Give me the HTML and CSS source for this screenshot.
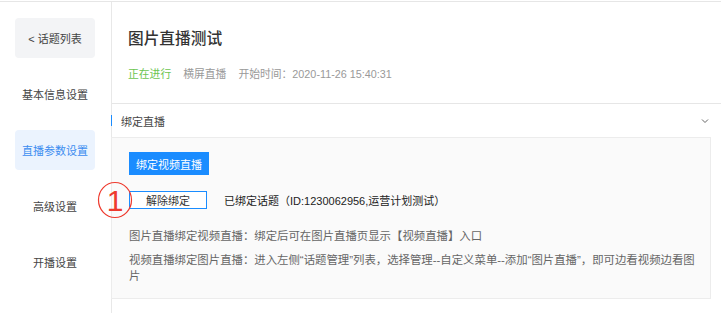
FILE: index.html
```html
<!DOCTYPE html>
<html lang="zh">
<head>
<meta charset="utf-8">
<link rel="stylesheet" href="styles.css">
</head>
<body>
<div class="page">
  <aside class="sidebar">
    <div class="nav-item nav-back">&lt; 话题列表</div>
    <div class="nav-item">基本信息设置</div>
    <div class="nav-item nav-active">直播参数设置</div>
    <div class="nav-item">高级设置</div>
    <div class="nav-item">开播设置</div>
  </aside>
  <main class="main">
    <header class="head">
      <h1 class="title">图片直播测试</h1>
      <div class="status">
        <span class="st-green">正在进行</span>
        <span class="st-gray">横屏直播</span>
        <span class="st-gray">开始时间：2020-11-26 15:40:31</span>
      </div>
    </header>
    <div class="section-head">
      <span class="marker"></span>
      <span class="section-title">绑定直播</span>
      <svg class="chev" width="8" height="6" viewBox="0 0 8 6"><path d="M1 1.5 L4 4.5 L7 1.5" fill="none" stroke="#666" stroke-width="1"/></svg>
    </div>
    <div class="panel">
      <button class="btn-primary">绑定视频直播</button>
      <div class="bind-row">
        <span class="anno"><svg width="36" height="38" viewBox="0 0 36 38"><ellipse cx="18" cy="19" rx="16.5" ry="17.5" fill="none" stroke="#ee3a2e" stroke-width="1.2"/><text x="18" y="30" text-anchor="middle" font-family="Liberation Sans, sans-serif" font-size="30" fill="#ee3a2e">1</text></svg></span>
        <button class="btn-outline">解除绑定</button>
        <span class="bound">已绑定话题（ID:1230062956,运营计划测试）</span>
      </div>
      <p class="desc">图片直播绑定视频直播：绑定后可在图片直播页显示【视频直播】入口</p>
      <p class="desc">视频直播绑定图片直播：进入左侧“话题管理”列表，选择管理--自定义菜单--添加“图片直播”，即可边看视频边看图片</p>
    </div>
  </main>
</div>
</body>
</html>
```
FILE: styles.css
```css
* { box-sizing: border-box; }
html, body { margin: 0; padding: 0; background: #fff; }
body {
  font-family: "Liberation Sans", "Noto Sans CJK SC", sans-serif;
  color: #333;
}
.page {
  display: flex;
  margin-top: 1px;
  border-top: 1px solid #e6e6e6;
  height: 312px;
}
.sidebar {
  width: 112px;
  flex: none;
  border-right: 1px solid #e8e8e8;
  padding: 16px 16px 0 15px;
  display: flex;
  flex-direction: column;
  gap: 16px;
}
.nav-item {
  height: 40px;
  border-radius: 4px;
  display: flex;
  align-items: center;
  justify-content: center;
  font-size: 11px;
  color: #444;
}
.nav-back { background: #f3f4f6; color: #444; }
.nav-active { background: #ebf3fe; color: #3b8cf0; }
.main { flex: 1; display: flex; flex-direction: column; min-width: 0; }
.head {
  height: 102px;
  border-bottom: 1px solid #e6e6e6;
  padding: 26px 16px 0 16px;
}
.title {
  margin: 0;
  font-size: 15.7px;
  line-height: 22px;
  font-weight: 500;
  color: #333;
}
.status {
  margin-top: 16px;
  display: flex;
  gap: 12px;
  font-size: 10.8px;
  line-height: 16px;
}
.st-green { color: #6cc550; }
.st-gray { color: #999; }
.section-head {
  height: 33px;
  display: flex;
  align-items: center;
  margin-left: -1px;
  padding-right: 12px;
}
.marker {
  width: 1px;
  height: 11px;
  background: #1a8cff;
  flex: none;
}
.section-title {
  margin-left: 9px;
  font-size: 11px;
  color: #444;
  flex: 1;
}
.chev { flex: none; }
.panel {
  margin: 0 10px 0 -1px;
  border: 1px solid #ececec;
  background: #fafafa;
  padding: 14px 11px 14px 17px;
  display: flex;
  flex-direction: column;
  align-items: flex-start;
}
.btn-primary {
  width: 80px;
  height: 23px;
  border: none;
  border-radius: 0;
  background: #1a8cff;
  color: #fff;
  font-family: inherit;
  font-size: 11px;
  padding: 0;
}
.bind-row {
  margin-top: 16px;
  display: flex;
  align-items: center;
  position: relative;
}
.anno {
  position: absolute;
  left: -32px;
  top: -10px;
  line-height: 0;
}
.btn-outline {
  width: 78px;
  height: 18px;
  border: 1px solid #1a8cff;
  background: #fff;
  color: #333;
  font-family: inherit;
  font-size: 11px;
  padding: 0;
  border-radius: 0;
}
.bound {
  margin-left: 17px;
  font-size: 11px;
  color: #222;
}
.desc {
  margin: 0;
  font-size: 11.4px;
  line-height: 16px;
  color: #666;
}
.bind-row + .desc { margin-top: 19px; }
.desc + .desc { margin-top: 8px; }
```
